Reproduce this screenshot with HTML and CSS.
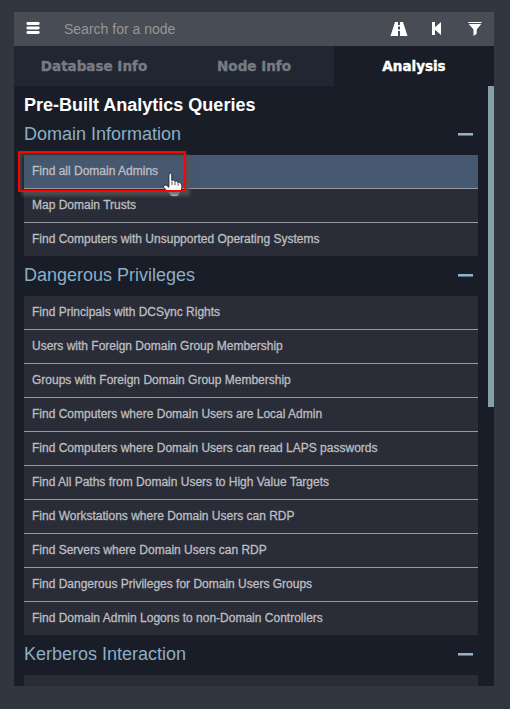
FILE: index.html
```html
<!DOCTYPE html>
<html lang="en">
<head>
<meta charset="utf-8">
<title>Analysis</title>
<link rel="stylesheet" href="styles.css">
</head>
<body>
<main class="panel">
  <header class="search">
    <svg class="menu" width="14" height="13" viewBox="0 0 14 13"><path d="M1.8 1.5h10.5M1.8 6h10.5M1.8 10.5h10.5" stroke="#fff" stroke-width="2.8" stroke-linecap="round"/></svg>
    <span class="placeholder">Search for a node</span>
    <svg class="road" width="18" height="14" viewBox="0 0 18 14"><path fill="#fff" d="M5 0h3v3h2V0h3l4.5 14H10V9H8v5H.5zM8 4.5v3h2v-3z" fill-rule="evenodd"/></svg>
    <svg class="back" width="10" height="13" viewBox="0 0 10 13"><path fill="#fff" d="M0 0h3v5.3L9 0v13L3 7.7V13H0z"/></svg>
    <svg class="filter" width="14" height="14" viewBox="0 0 14 14"><path fill="#fff" d="M.4 0h13.2v1H.4zM.7 2h12.6L8.7 7.6v4.1L5.5 14V7.6z"/></svg>
  </header>
  <nav class="tabs">
    <span class="tab database">Database Info</span>
    <span class="tab node">Node Info</span>
    <span class="tab active">Analysis</span>
  </nav>
  <div class="body">
    <h1>Pre-Built Analytics Queries</h1>
    <section>
      <h2>Domain Information<i class="minus"></i></h2>
      <ul>
        <li class="hover"><span>Find all Domain Admins</span></li>
        <li><span>Map Domain Trusts</span></li>
        <li><span>Find Computers with Unsupported Operating Systems</span></li>
      </ul>
    </section>
    <section>
      <h2>Dangerous Privileges<i class="minus"></i></h2>
      <ul>
        <li><span>Find Principals with DCSync Rights</span></li>
        <li><span>Users with Foreign Domain Group Membership</span></li>
        <li><span>Groups with Foreign Domain Group Membership</span></li>
        <li><span>Find Computers where Domain Users are Local Admin</span></li>
        <li><span>Find Computers where Domain Users can read LAPS passwords</span></li>
        <li><span>Find All Paths from Domain Users to High Value Targets</span></li>
        <li><span>Find Workstations where Domain Users can RDP</span></li>
        <li><span>Find Servers where Domain Users can RDP</span></li>
        <li><span>Find Dangerous Privileges for Domain Users Groups</span></li>
        <li><span>Find Domain Admin Logons to non-Domain Controllers</span></li>
      </ul>
    </section>
    <section>
      <h2>Kerberos Interaction<i class="minus"></i></h2>
      <ul><li></li></ul>
    </section>
    <div class="scrollbar"></div>
  </div>
</main>
<svg class="cursor" width="23" height="27" viewBox="0 0 20 23"><path fill="#fff" stroke="#1b2230" stroke-width=".8" d="M6 1.7Q7.3-.2 8.5 1.7V7q1.6-.8 2.6.8 1.7-.7 2.6.9 1.9-.6 2.8 1.2.8.5.8 2.5 0 4-2 6.2-.5 1.7-2 2.3-3 .9-5.8-.2-1-1.3-2.2-3.4L1.4 13q-.4-1.8 1.3-2 1.4 0 3.3 2.1z"/><path d="M8.7 8v3M11.3 8.5v2.7M14 9.5v2" stroke="#1b2230" stroke-width=".7"/></svg>
<div class="callout"></div>
</body>
</html>
```
FILE: styles.css
```css
* { box-sizing: border-box; }
body {
  margin: 0;
  width: 510px;
  height: 709px;
  padding: 12px 16px 23px 14px;
  overflow: hidden;
  position: relative;
  background: #32363e;
  font-family: "Liberation Sans", Arial, sans-serif;
}
.panel { height: 674px; overflow: hidden; background: #191d27; }
.search {
  display: flex;
  align-items: center;
  height: 34px;
  padding: 0 12px 1px;
  background: #484c54;
}
.search svg { display: block; }
.placeholder { margin-left: 24px; padding-top: 1px; flex: 1; font-size: 14px; color: #969799; }
.road { margin-right: 24px; }
.back { margin-right: 26px; }
.tabs { display: grid; grid-template-columns: repeat(3, 160px); height: 40px; }
.tab {
  display: flex;
  align-items: center;
  justify-content: center;
  background: #212633;
  color: #777b82;
  font-family: "DejaVu Sans", sans-serif;
  font-size: 13.5px;
  font-weight: 700;
  -webkit-text-stroke: .4px currentColor;
}
.tab.active { background: #191d27; color: #fff; }
.body { position: relative; height: 600px; padding: 4px 16px 0 10px; }
h1 { margin: 0; height: 25px; line-height: 30px; font-size: 18px; color: #fff; }
h2 {
  display: flex;
  align-items: center;
  justify-content: space-between;
  margin: 0;
  height: 40px;
  padding: 0 5px 1px 0;
  font-size: 18px;
  font-weight: 400;
  color: #8caec5;
}
.minus { width: 15px; height: 3px; margin-bottom: 1px; background: linear-gradient(#93b1c8 67%, #5a7086 67%); }
ul { margin: 0; padding: 0; list-style: none; }
li {
  height: 34px;
  padding-left: 8px;
  border-bottom: 1px solid #9699a1;
  background: #2a2d37;
  line-height: 32px;
  font-size: 12px;
  color: #bdbec1;
  -webkit-text-stroke: .3px #bdbec1;
  white-space: nowrap;
}
li:last-child { height: 33px; border-bottom: 0; }
li.hover { background: #46586f; }
.scrollbar { position: absolute; top: 0; right: 0; width: 6px; height: 321px; background: #869fa6; }
.callout {
  position: absolute;
  left: 18px;
  top: 151px;
  width: 168px;
  height: 41px;
  border: 2px solid #fa0505;
  box-shadow: 4px 4px 3px rgba(85, 85, 85, .8), inset 3px 3px 3px rgba(75, 75, 75, .7);
}
.cursor { position: absolute; left: 162px; top: 172px; }
```
